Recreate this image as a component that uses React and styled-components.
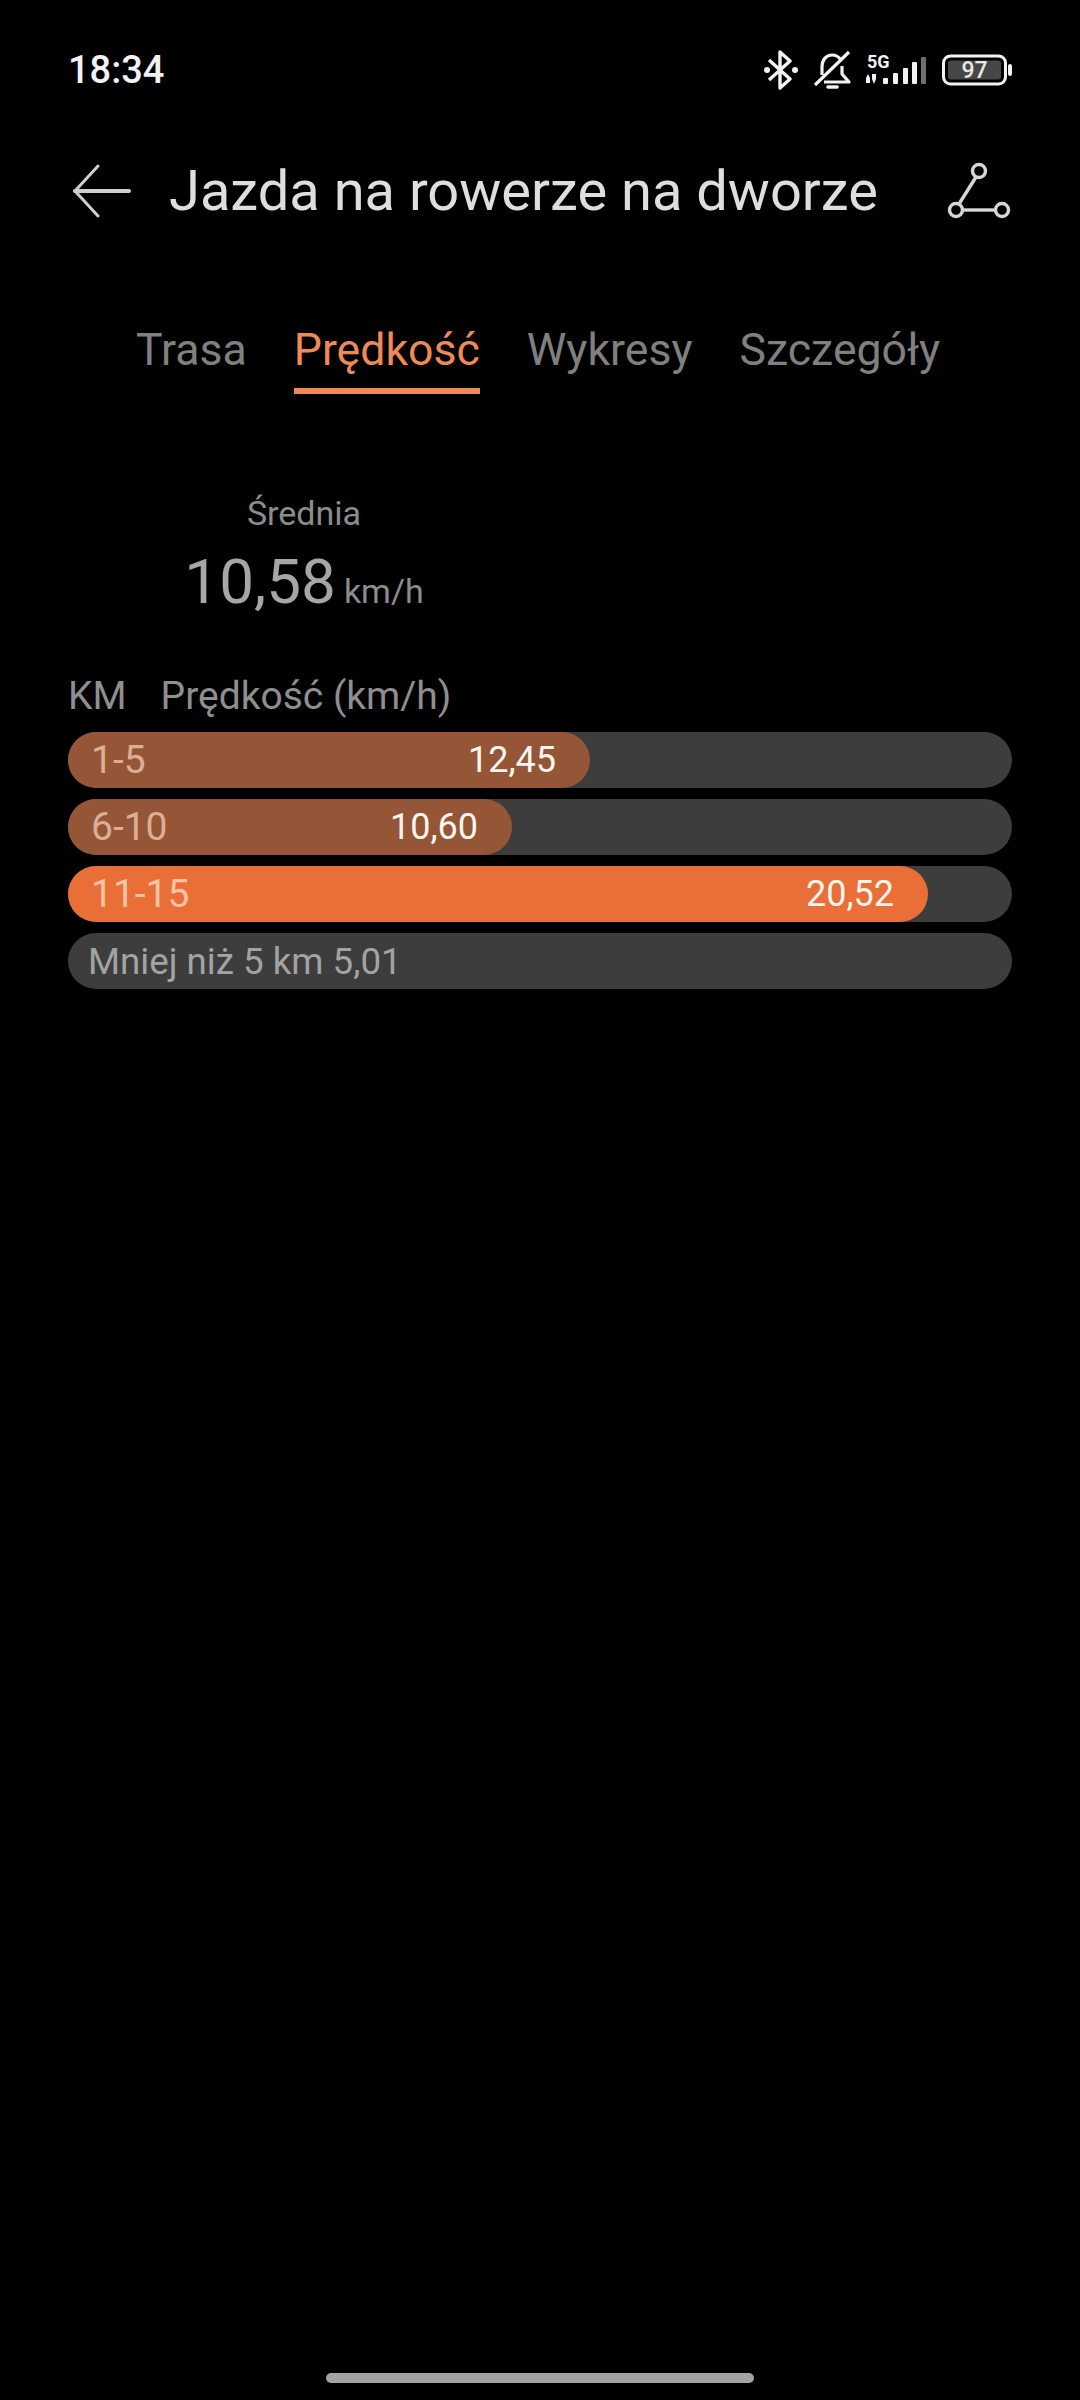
import React from "react";
import styled, { createGlobalStyle } from "styled-components";

const GlobalStyle = createGlobalStyle`
  html, body {
    margin: 0;
    padding: 0;
    background: #000;
    font-family: Roboto, "Liberation Sans", sans-serif;
  }
`;

const Page = styled.div`
  width: 1080px;
  height: 2400px;
  background: #000;
  display: flex;
  flex-direction: column;
  overflow: hidden;
`;

const StatusBar = styled.div`
  height: 60px;
  margin-top: 40px;
  padding: 0 67px 0 68px;
  display: flex;
  align-items: center;
  justify-content: space-between;
`;

const Time = styled.div`
  font-size: 38px;
  font-weight: 500;
  color: #f2f2f2;
`;

const StatusIcons = styled.div`
  display: flex;
  align-items: center;
`;

const Header = styled.div`
  height: 70px;
  margin-top: 56px;
  padding: 0 69px 0 72px;
  display: flex;
  align-items: center;
`;

const Title = styled.div`
  flex: 1;
  margin-left: 37px;
  font-size: 56px;
  color: #dedede;
  white-space: nowrap;
`;

const Tabs = styled.div`
  margin-top: 94px;
  display: flex;
  padding-left: 136px;
  gap: 47px;
`;

const Tab = styled.div`
  height: 74px;
  box-sizing: border-box;
  font-size: 44.6px;
  line-height: 60px;
  color: ${(p) => (p.$active ? "#ef8a58" : "#808080")};
  border-bottom: 6px solid ${(p) => (p.$active ? "#ef8a58" : "transparent")};
`;

const Stats = styled.div`
  margin-top: 97px;
  width: 608px;
  display: flex;
  flex-direction: column;
  align-items: center;
`;

const StatLabel = styled.div`
  font-size: 34px;
  line-height: 44px;
  color: #8c8c8c;
`;

const StatValue = styled.div`
  margin-top: 9px;
  font-size: 62px;
  line-height: 76px;
  color: #a6a6a6;
`;

const StatUnit = styled.span`
  margin-left: 8px;
  font-size: 34px;
  color: #8c8c8c;
`;

const Legend = styled.div`
  margin-top: 42px;
  padding-left: 68px;
  display: flex;
  gap: 34px;
  font-size: 39px;
  line-height: 50px;
  color: #8f8f8f;
`;

const Rows = styled.div`
  margin-top: 11px;
  padding: 0 68px;
  display: flex;
  flex-direction: column;
  gap: 11px;
`;

const Track = styled.div`
  height: 56px;
  border-radius: 28px;
  background: #3d3d3d;
  display: flex;
  align-items: center;
`;

const Fill = styled.div`
  height: 100%;
  box-sizing: border-box;
  padding: 0 34px 0 23px;
  border-radius: 28px;
  background: ${(p) => (p.$top ? "#ea6e38" : "#955638")};
  display: flex;
  align-items: center;
  justify-content: space-between;
`;

const RangeLabel = styled.span`
  font-size: 39px;
  color: ${(p) => (p.$top ? "#f9c3a6" : "#dcae96")};
`;

const SpeedValue = styled.span`
  font-size: 36px;
  color: #fbf5f0;
`;

const NoDataText = styled.span`
  padding-left: 20px;
  font-size: 36.7px;
  color: #a3a3a3;
`;

const HomeBar = styled.div`
  width: 428px;
  height: 10px;
  margin: auto auto 17px;
  border-radius: 5px;
  background: #a3a3a3;
`;

const BluetoothIcon = () => (
  <svg width="38" height="40" viewBox="0 0 38 40" fill="none" stroke="#f2f2f2" strokeWidth="3.4">
    <path d="M8 10 L29 29 L19 38 V2 L29 11 L8 30" strokeLinejoin="round" />
    <circle cx="6" cy="20" r="3" fill="#f2f2f2" stroke="none" />
    <circle cx="34" cy="20" r="3" fill="#f2f2f2" stroke="none" />
  </svg>
);

const BellOffIcon = () => (
  <svg width="38" height="40" viewBox="0 0 38 40" fill="none" stroke="#f2f2f2" strokeWidth="3.2" style={{ marginLeft: 14 }}>
    <path d="M9 25 V17 C9 10 13 5 19 5 C23 5 26 7 28 10" />
    <path d="M29 16 V24 L36 32 H11" strokeLinejoin="round" />
    <path d="M2 35 L36 2" />
    <path d="M15 37 H24" strokeWidth="3.6" strokeLinecap="round" />
  </svg>
);

const SignalIcon = () => (
  <svg width="64" height="40" viewBox="0 0 64 40" style={{ marginLeft: 12 }}>
    <text x="4" y="18" fontFamily="Roboto, sans-serif" fontSize="18" fontWeight="700" fill="#f2f2f2">5G</text>
    <g fill="#f2f2f2">
      <path d="M3 28 L5 24 L7 28 V33 H3 Z" />
      <path d="M9 24 H13 V29 L11 34 L9 29 Z" />
      <rect x="20" y="28" width="5" height="6" rx="1" />
      <rect x="30" y="23" width="5" height="11" rx="1" />
      <rect x="40" y="18" width="5" height="16" rx="1" />
      <rect x="49" y="12" width="5" height="22" rx="1" />
    </g>
    <rect x="58" y="7" width="5" height="27" rx="1" fill="#6e6e6e" />
  </svg>
);

const BatteryIcon = () => (
  <svg width="71" height="32" viewBox="0 0 71 32" style={{ marginLeft: 15 }}>
    <rect x="1.5" y="2" width="62" height="28" rx="7" fill="none" stroke="#f2f2f2" strokeWidth="3" />
    <rect x="6" y="6.5" width="53" height="19" rx="3" fill="#474747" />
    <text x="32.5" y="24" textAnchor="middle" fontFamily="Roboto, sans-serif" fontSize="23" fontWeight="500" fill="#e8e8e8">97</text>
    <rect x="66" y="10" width="4" height="12" rx="2" fill="#f2f2f2" />
  </svg>
);

const BackIcon = () => (
  <svg width="60" height="54" viewBox="0 0 60 54" fill="none" stroke="#cfcfcf" strokeWidth="3" strokeLinecap="round" strokeLinejoin="round">
    <path d="M26 2 L3 27 L26 52" />
    <path d="M3 27 H57" strokeWidth="4" />
  </svg>
);

const RouteIcon = () => (
  <svg width="64" height="58" viewBox="0 0 64 58" fill="none" stroke="#d6d6d6" strokeWidth="3.4">
    <circle cx="32" cy="9" r="6.5" />
    <circle cx="9" cy="48" r="6.5" />
    <circle cx="55" cy="48" r="6.5" />
    <path d="M29 15 L12 42" />
    <path d="M16 48 H48" />
  </svg>
);

// bar width follows the speed: about 41.9px per km/h
const PX_PER_KMH = 41.9;

const rows = [
  { range: "1-5", speed: 12.45 },
  { range: "6-10", speed: 10.6 },
  { range: "11-15", speed: 20.52, top: true },
];

const formatSpeed = (v) => v.toFixed(2).replace(".", ",");

export default function App() {
  return (
    <Page>
      <GlobalStyle />
      <StatusBar>
        <Time>18:34</Time>
        <StatusIcons>
          <BluetoothIcon />
          <BellOffIcon />
          <SignalIcon />
          <BatteryIcon />
        </StatusIcons>
      </StatusBar>
      <Header>
        <BackIcon />
        <Title>Jazda na rowerze na dworze</Title>
        <RouteIcon />
      </Header>
      <Tabs>
        <Tab>Trasa</Tab>
        <Tab $active>Prędkość</Tab>
        <Tab>Wykresy</Tab>
        <Tab>Szczegóły</Tab>
      </Tabs>
      <Stats>
        <StatLabel>Średnia</StatLabel>
        <StatValue>
          10,58<StatUnit>km/h</StatUnit>
        </StatValue>
      </Stats>
      <Legend>
        <span>KM</span>
        <span>Prędkość (km/h)</span>
      </Legend>
      <Rows>
        {rows.map((r) => (
          <Track key={r.range}>
            <Fill $top={r.top} style={{ width: Math.round(r.speed * PX_PER_KMH) }}>
              <RangeLabel $top={r.top}>{r.range}</RangeLabel>
              <SpeedValue>{formatSpeed(r.speed)}</SpeedValue>
            </Fill>
          </Track>
        ))}
        <Track>
          <NoDataText>Mniej niż 5 km 5,01</NoDataText>
        </Track>
      </Rows>
      <HomeBar />
    </Page>
  );
}
